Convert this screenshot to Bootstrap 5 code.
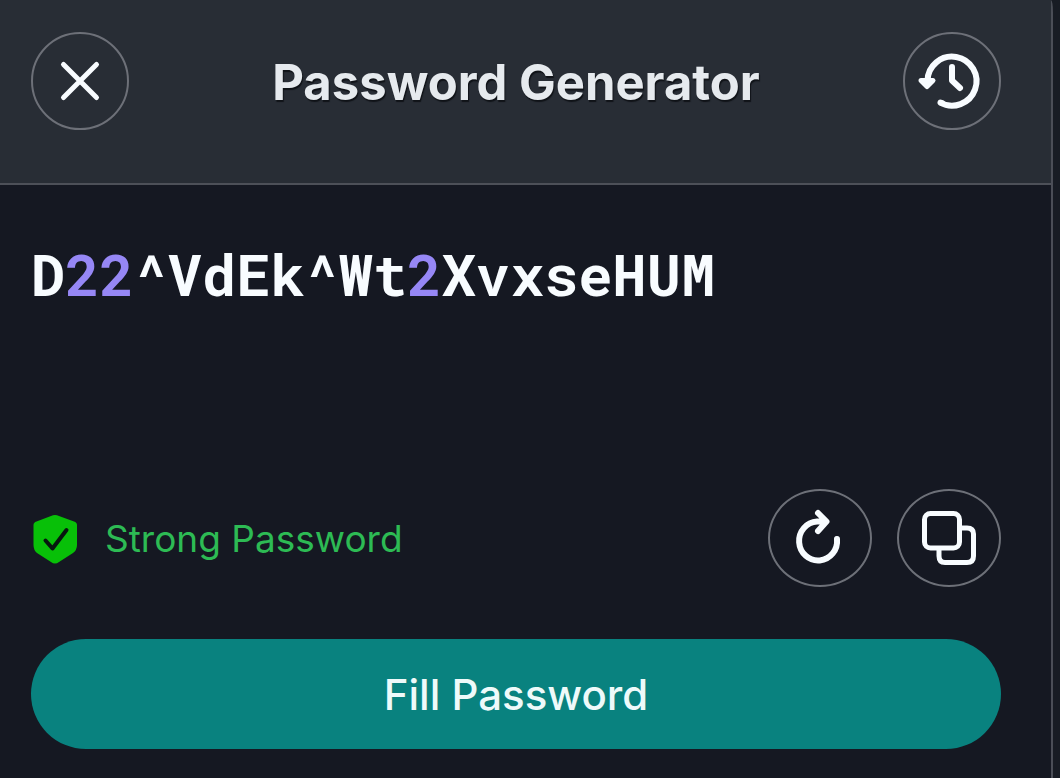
<!DOCTYPE html>
<html lang="en" data-bs-theme="dark">
<head>
<meta charset="utf-8">
<meta name="viewport" content="width=device-width, initial-scale=1">
<title>Password Generator</title>
<link href="https://cdn.jsdelivr.net/npm/bootstrap@5.3.0/dist/css/bootstrap.min.css" rel="stylesheet">
<style>
  body { background: #181c24; font-family: Inter, "Liberation Sans", sans-serif; }
  .panel { background: #151822; border-right: 2px solid #4b4e57; border-top-right-radius: 2px 12px; margin-right: 7px; }
  .panel-head { background: #282d35; border-bottom: 2px solid #4d5058; padding: 32px 50px 53px 31px; }
  .panel-main { padding: 53px 50px 29px 31px; }
  .panel-title { font-size: 49px; line-height: 60px; font-weight: 700; color: #e6eaee; text-shadow: 1px 2px 1px #101318; }
  .round-btn { width: 98px; height: 98px; border: 2px solid #6d7078; border-radius: 50%; color: #f8fcff; }
  .round-btn:hover, .round-btn:focus-visible { border-color: #a0a3ab; color: #fff; }
  .round-btn.wide-btn { width: 104px; }
  .round-btn svg { width: 64px; height: 64px; overflow: visible; }
  .actions { gap: 25px; }
  .secret { font-family: "Roboto Mono", "DejaVu Sans Mono", monospace; font-size: 57px; line-height: 72px; font-weight: 700; color: #f8fcff; }
  .digit { color: #9687f5; }
  .strength { gap: 26px; padding-top: 2px; font-size: 37px; line-height: 48px; color: #2dbb54; }
  .shield { width: 48px; height: 52px; }
  .fill-btn { height: 110px; margin-top: 52px; background: #09827f; color: #eefafa; font-size: 42px; font-weight: 500; }
  .fill-btn:hover { background: #0b918d; color: #fff; }
</style>
</head>
<body>
<main class="panel min-vh-100 d-flex flex-column overflow-hidden">
  <header class="panel-head d-flex align-items-center justify-content-between">
    <button type="button" class="btn round-btn p-0 d-flex align-items-center justify-content-center" aria-label="Close">
      <svg viewBox="0 0 64 64" fill="none" stroke="currentColor" stroke-width="5" stroke-linecap="round"><path d="M15.500 15.500 48.500 48.500M48.500 15.500 15.500 48.500"/></svg>
    </button>
    <h1 class="panel-title m-0 pt-1">Password Generator</h1>
    <button type="button" class="btn round-btn p-0 d-flex align-items-center justify-content-center" aria-label="History">
      <svg viewBox="0 0 64 64" fill="none" stroke="currentColor" stroke-width="6" stroke-linecap="round" stroke-linejoin="round"><path d="M7.500 32A24.500 24.500 0 1 1 20 53.500" stroke-linecap="butt"/><path d="M20.500 53.500 22 54"/><path d="M1 31.500 7 37.500 13 31.500Z" stroke-width="5" fill="currentColor"/><path d="M32 18V31.500L40 39"/></svg>
    </button>
  </header>
  <section class="panel-main flex-grow-1 d-flex flex-column">
    <output class="secret d-block text-break">D<span class="digit">22</span>^VdEk^Wt<span class="digit">2</span>XvxseHUM</output>
    <div class="d-flex align-items-center justify-content-between mt-auto">
      <div class="strength d-flex align-items-center">
        <svg class="shield" viewBox="0 0 48 52" aria-hidden="true"><path fill="#08c008" d="M24 2Q26 2 28 3L43 8.500Q46 9.500 46 12V32Q46 37 42 40L28 49Q24 52 20 49L6 40Q2.500 37 2.500 32V12Q2.500 9.500 5.500 8.500L20 3Q22 2 24 2Z"/><path d="M14.500 27.500 21.500 35.500 35.500 17" fill="none" stroke="#07170f" stroke-width="4" stroke-linecap="round" stroke-linejoin="round"/></svg>
        <span>Strong Password</span>
      </div>
      <div class="actions d-flex">
        <button type="button" class="btn round-btn wide-btn p-0 d-flex align-items-center justify-content-center" aria-label="Generate again">
          <svg viewBox="0 0 64 64" fill="none" stroke="currentColor" stroke-width="6" stroke-linecap="round" stroke-linejoin="round"><path d="M49 33A19 19.500 0 1 1 29 15.500H38M30 7 38.500 15.500 30 25"/></svg>
        </button>
        <button type="button" class="btn round-btn wide-btn p-0 d-flex align-items-center justify-content-center" aria-label="Copy">
          <svg viewBox="0 0 64 64" fill="none" stroke="currentColor" stroke-width="5" stroke-linejoin="round"><rect x="7.500" y="7.500" width="35" height="34.500" rx="6"/><path d="M42 22H50Q56.500 22 56.500 28V50Q56.500 56.500 50 56.500H28Q22 56.500 22 50V42"/></svg>
        </button>
      </div>
    </div>
    <button type="button" class="btn fill-btn rounded-pill w-100 border-0 p-0">Fill Password</button>
  </section>
</main>
<script src="https://cdn.jsdelivr.net/npm/bootstrap@5.3.0/dist/js/bootstrap.bundle.min.js"></script>
</body>
</html>
